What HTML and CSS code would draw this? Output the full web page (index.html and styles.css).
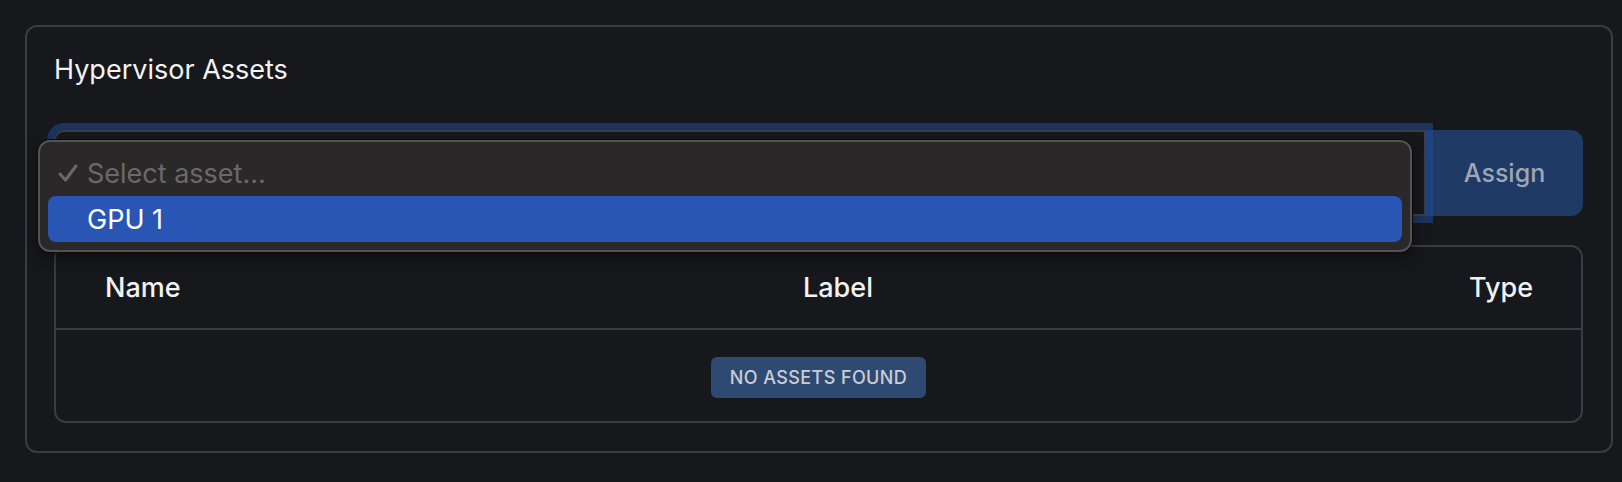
FILE: index.html
```html
<!DOCTYPE html>
<html lang="en">
<head>
<meta charset="utf-8">
<title>Hypervisor Assets</title>
<link rel="stylesheet" href="styles.css">
</head>
<body>
  <section class="card">
    <h2 class="card-title">Hypervisor Assets</h2>
    <div class="input-group">
      <div class="select-box"></div>
      <button class="btn-assign" type="button">Assign</button>
    </div>
    <div class="table-box">
      <div class="table-head">
        <span class="col-name">Name</span>
        <span class="col-label">Label</span>
        <span class="col-type">Type</span>
      </div>
      <div class="table-body">
        <span class="badge">No assets found</span>
      </div>
    </div>
    <div class="popup">
      <div class="popup-item placeholder"><svg class="check" width="20" height="18" viewBox="0 0 20 18"><polyline points="2,10 7.5,16 18,2" fill="none" stroke="#6b6869" stroke-width="3" stroke-linecap="round" stroke-linejoin="round"/></svg>Select asset...</div>
      <div class="popup-item active">GPU 1</div>
    </div>
  </section>
</body>
</html>
```

FILE: styles.css
```css
* { box-sizing: border-box; }
html, body {
  margin: 0;
  padding: 0;
  background: #16181b;
  font-family: Inter, "Noto Sans", "Liberation Sans", sans-serif;
  color: #f0f0f0;
}
body { padding: 25px 9px 29px 25px; }
.card {
  position: relative;
  width: 1588px;
  height: 428px;
  border: 2px solid #393b47;
  border-radius: 12px;
  padding: 26px 28px 28px 27px;
}
.card-title {
  margin: 0;
  font-size: 27px;
  font-weight: 400;
  line-height: 34px;
  color: #f3f3f3;
}
.input-group {
  display: flex;
  margin-top: 43px;
  height: 86px;
}
.select-box {
  flex: 1;
  position: relative;
  z-index: 1;
  border: 2px solid #3b3e4a;
  border-radius: 10px 0 0 10px;
  box-shadow: 0 0 0 7px rgba(35, 75, 150, 0.55);
}
.btn-assign {
  width: 157px;
  border: 0;
  border-radius: 0 12px 12px 0;
  background: #1e3a65;
  color: #9ea6b5;
  font-family: inherit;
  font-size: 25px;
  font-weight: 500;
}
.table-box {
  margin-top: 29px;
  border: 2px solid #393b47;
  border-radius: 12px;
  height: 178px;
}
.table-head {
  display: flex;
  align-items: center;
  height: 83px;
  border-bottom: 2px solid #393b47;
  padding: 0 48px 0 49px;
  font-size: 27px;
  font-weight: 500;
  color: #f2f2f2;
}
.col-name { width: 698px; }
.col-label { flex: 1; }
.col-type { text-align: right; }
.table-body {
  display: flex;
  justify-content: center;
  align-items: center;
  height: 91px;
  padding-top: 4px;
}
.badge {
  display: inline-flex;
  align-items: center;
  height: 41px;
  padding: 0 19px;
  border-radius: 6px;
  background: #2f4a72;
  color: #c9cdd5;
  font-size: 18px;
  font-weight: 500;
  text-transform: uppercase;
  letter-spacing: 0.4px;
}
.popup {
  position: absolute;
  z-index: 5;
  left: 11px;
  top: 113px;
  width: 1374px;
  height: 112px;
  padding: 8px;
  background: #2b2829;
  border: 2px solid #545253;
  border-radius: 12px;
  box-shadow: 0 0 0 1px #0c0c0d, 0 6px 16px rgba(0, 0, 0, 0.45);
  font-size: 27px;
}
.popup-item {
  height: 46px;
  display: flex;
  align-items: center;
  padding-left: 39px;
  border-radius: 8px;
}
.popup-item.placeholder {
  color: #6b6869;
  padding-left: 10px;
}
.check {
  margin-right: 9px;
  flex: none;
}
.popup-item.active {
  background: #2955b4;
  color: #ffffff;
}
```
